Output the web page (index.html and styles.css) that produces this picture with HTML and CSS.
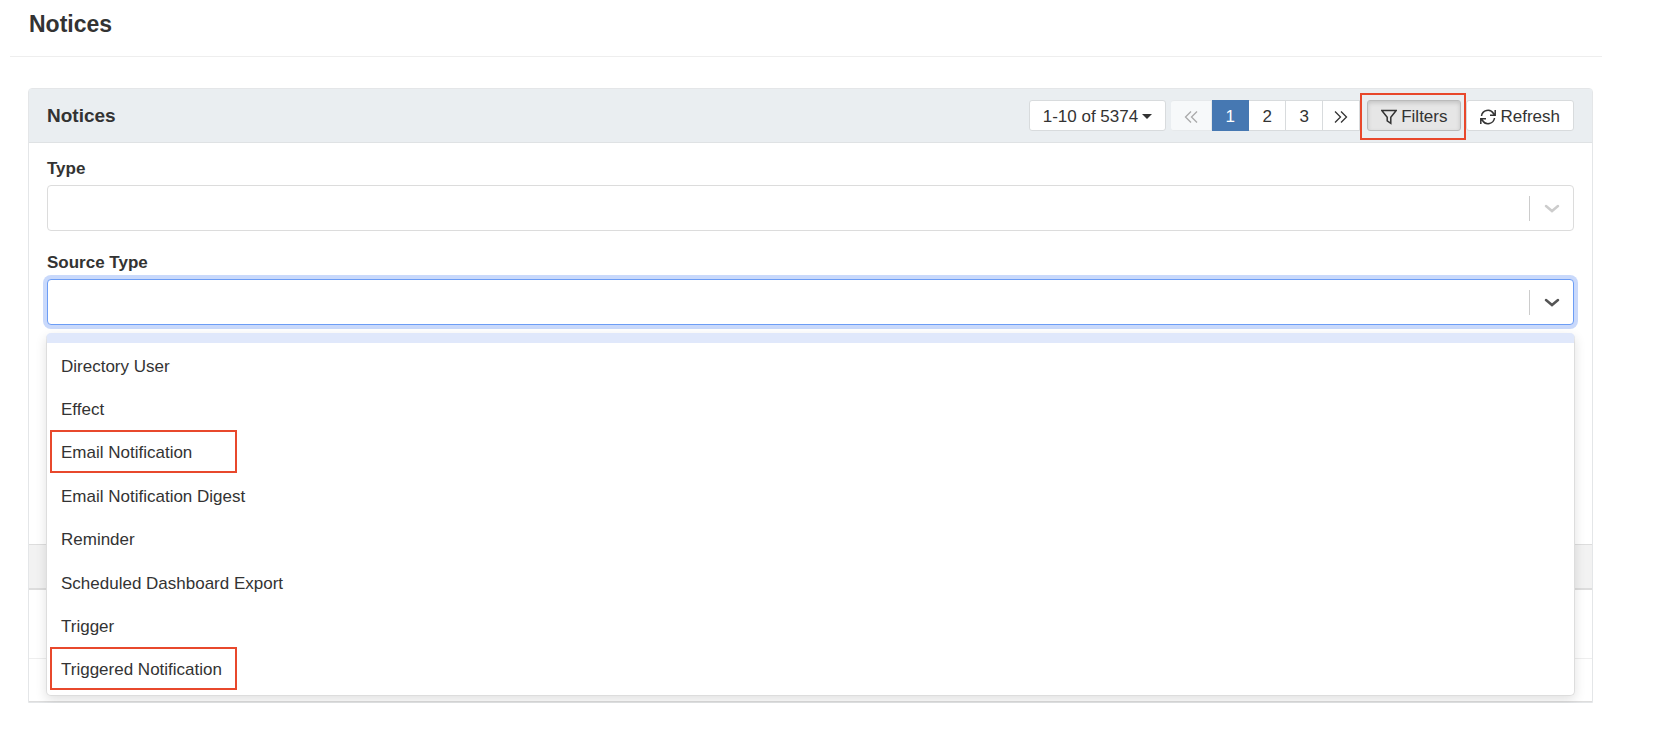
FILE: index.html
```html
<!DOCTYPE html>
<html lang="en">
<head>
  <meta charset="UTF-8">
  <title>Notices</title>
  <link rel="stylesheet" href="styles.css">
</head>
<body>

  <header class="page-header">
    <h1>Notices</h1>
  </header>

  <main class="panel">
    <div class="panel-heading">
      <h2>Notices</h2>
      <div class="toolbar">
        <button type="button" class="btn btn-range">1-10 of 5374 <span class="caret"></span></button>
        <nav class="pagination" aria-label="Pages">
          <button type="button" class="btn page-prev" aria-label="Previous" disabled>
            <svg width="14" height="14" viewBox="0 0 14 14"><path d="M7 1.500 1.500 7 7 12.500M13 1.500 7.500 7l5.500 5.500"/></svg>
          </button>
          <button type="button" class="btn page active">1</button>
          <button type="button" class="btn page">2</button>
          <button type="button" class="btn page">3</button>
          <button type="button" class="btn page-next" aria-label="Next">
            <svg width="14" height="14" viewBox="0 0 14 14"><path d="M1 1.500 6.500 7 1 12.500M7 1.500 12.500 7 7 12.500"/></svg>
          </button>
        </nav>
        <button type="button" class="btn btn-filters pressed marked">
          <svg width="16" height="16" viewBox="0 0 16 16"><path d="M.8 1.500h14.400L9.800 8.300v6L6.200 11.800V8.300z"/></svg>
          Filters
        </button>
        <button type="button" class="btn btn-refresh">
          <svg width="16" height="16" viewBox="0 0 16 16"><path d="M1.500 7A6.500 6.500 0 0 1 13.500 4.500L15 6M15.200 1v5.200H10M14.500 9A6.500 6.500 0 0 1 2.500 11.500L1 10M.8 15V9.800H6"/></svg>
          Refresh
        </button>
      </div>
    </div>

    <form class="filters">
      <div class="field">
        <label for="type">Type</label>
        <div class="select">
          <select id="type"><option></option></select>
          <span class="indicator">
            <svg width="16" height="10" viewBox="0 0 16 10"><path d="m2 2 6 5 6-5"/></svg>
          </span>
        </div>
      </div>
      <div class="field">
        <label for="source-type">Source Type</label>
        <div class="select focused">
          <select id="source-type"><option></option></select>
          <span class="indicator">
            <svg width="16" height="10" viewBox="0 0 16 10"><path d="m2 2 6 5 6-5"/></svg>
          </span>
          <div class="menu">
            <ul class="options">
              <li>Directory User</li>
              <li>Effect</li>
              <li class="marked">Email Notification</li>
              <li>Email Notification Digest</li>
              <li>Reminder</li>
              <li>Scheduled Dashboard Export</li>
              <li>Trigger</li>
              <li class="marked">Triggered Notification</li>
            </ul>
          </div>
        </div>
      </div>
    </form>

    <table class="results">
      <thead>
        <tr><th></th></tr>
      </thead>
      <tbody>
        <tr class="tall"><td></td></tr>
        <tr><td></td></tr>
      </tbody>
    </table>
  </main>

</body>
</html>
```
FILE: styles.css
```css
:root {
  --text: #333;
  --border: #e4e6e8;
  --heading-bg: #eaeef1;
  --primary: #4678b2;
  --mark: #e8482c;
}

*,
*::after {
  box-sizing: border-box;
}

body {
  margin: 0;
  padding: 0 74px 0 10px;
  font-family: "Liberation Sans", Arial, sans-serif;
  font-size: 17px;
  line-height: 24px;
  color: var(--text);
  background: #fff;
}

.page-header {
  padding: 8px 19px 16px;
  border-bottom: 1px solid #eee;
}

h1 {
  margin: 0;
  font-size: 23px;
  line-height: 32px;
}

.panel {
  margin: 31px 9px 0 18px;
  border: 1px solid var(--border);
  border-top-left-radius: 4px;
  border-top-right-radius: 4px;
}

.panel-heading {
  display: flex;
  align-items: center;
  justify-content: space-between;
  height: 54px;
  padding: 0 18px;
  background: var(--heading-bg);
  border-bottom: 1px solid #dfe2e4;
}

h2 {
  margin: 0;
  font-size: 19px;
}

.toolbar,
.pagination {
  display: flex;
}

.toolbar {
  gap: 5px;
}

.btn {
  display: flex;
  align-items: center;
  justify-content: center;
  gap: 4px;
  height: 31px;
  padding: 2px 13px 0;
  font: inherit;
  color: var(--text);
  background: #fff;
  border: 1px solid #d8dbdd;
  border-radius: 3px;
}

.btn svg {
  fill: none;
  stroke: currentColor;
  stroke-width: 1.5;
}

.caret {
  border-top: 5px solid;
  border-left: 5px solid transparent;
  border-right: 5px solid transparent;
}

.pagination {
  margin-right: 2px;
}

.pagination .btn {
  width: 37px;
  padding: 2px 0 0;
  border-left-width: 0;
  border-radius: 0;
}

.pagination svg {
  stroke-width: 1.3;
}

.pagination .page-prev {
  width: 41px;
  color: #aaa;
  background: #f7f9fa;
  border-color: #e6e9eb;
  border-radius: 3px 0 0 3px;
}

.pagination .active {
  color: #fff;
  background: var(--primary);
  border-color: var(--primary);
}

.pressed {
  background: #e6e6e6;
  border-color: #bbb;
  box-shadow: inset 0 2px 4px rgba(0, 0, 0, 0.15);
}

.marked {
  position: relative;
}

.marked::after {
  content: "";
  position: absolute;
  border: 2px solid var(--mark);
}

.btn.marked::after {
  inset: -8px -6px -10px -8px;
}

.filters {
  height: 401px;
  padding: 14px 18px 0;
}

.field {
  margin-bottom: 20px;
}

.field label {
  display: block;
  margin-bottom: 4px;
  font-weight: bold;
}

.select {
  position: relative;
}

.select select {
  display: block;
  width: 100%;
  height: 46px;
  appearance: none;
  background: #fff;
  border: 1px solid #dcdcdc;
  border-radius: 4px;
}

.indicator {
  position: absolute;
  top: 11px;
  right: 1px;
  display: flex;
  align-items: center;
  justify-content: center;
  width: 44px;
  height: 25px;
  color: #ccc;
  border-left: 1px solid #ccc;
  pointer-events: none;
}

.indicator svg {
  fill: none;
  stroke: currentColor;
  stroke-width: 2.5;
}

.select .indicator svg {
  stroke-linecap: round;
}

.select.focused select {
  border-color: #6c9df5;
  outline: none;
  box-shadow: 0 0 0 4px #c9d9fb;
}

.focused .indicator svg {
  color: #555;
}

.menu {
  position: absolute;
  top: 54px;
  left: -1px;
  right: -1px;
  background: #fff;
  border: 1px solid #ddd;
  border-top: 10px solid #e0e8fb;
  border-radius: 5px;
  box-shadow: 0 4px 12px rgba(0, 0, 0, 0.12);
}

.options {
  display: grid;
  grid-auto-rows: 1fr;
  height: 347px;
  margin: 0 0 5px;
  padding: 0;
  list-style: none;
}

.options li {
  display: flex;
  align-items: center;
  padding: 4px 14px 0;
}

.options .marked::after {
  inset: 0 auto 0 3px;
  width: 187px;
}

.results {
  width: 100%;
  border-collapse: collapse;
}

.results th {
  height: 44px;
  background: #f2f2f2;
  border-top: 1px solid #ddd;
  border-bottom: 2px solid #ddd;
}

.results td {
  height: 43px;
  border-bottom: 1px solid #ddd;
}

.results .tall td {
  height: 70px;
  border-color: #eee;
}
```
